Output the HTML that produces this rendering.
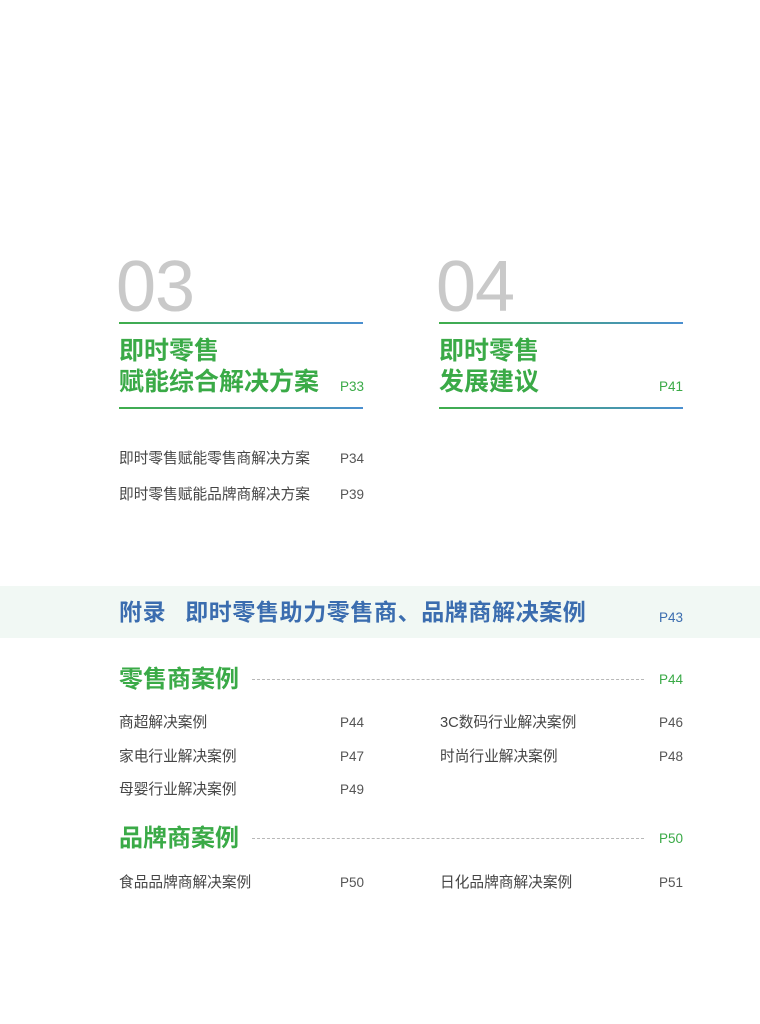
<!DOCTYPE html>
<html><head><meta charset="utf-8"><style>
body{margin:0;width:760px;height:1024px;background:#fff;position:relative;overflow:hidden;font-family:"Liberation Sans","Noto Sans CJK SC",sans-serif;}
.a{position:absolute;white-space:nowrap;line-height:1;}
.num{font-size:72px;color:#c9c9c9;letter-spacing:-1px;}
.ln{position:absolute;height:1.5px;background:linear-gradient(90deg,#3fae4a,#4a8fd0);}
.h{font-size:25px;font-weight:bold;color:#3aaa47;line-height:31px;}
.g{color:#3aaa47;}
.p{font-size:13.5px;}
.it{font-size:14.7px;color:#454545;}
.ip{font-size:13.5px;color:#555;}
.dash{position:absolute;height:0;border-top:1px dashed #b8b8b8;}
</style></head><body>
<div class="a num" style="left:116px;top:251px;">03</div>
<div class="a num" style="left:436px;top:251px;">04</div>
<div class="ln" style="left:119px;top:322px;width:244px;"></div>
<div class="ln" style="left:439px;top:322px;width:244px;"></div>
<div class="ln" style="left:119px;top:407px;width:244px;"></div>
<div class="ln" style="left:439px;top:407px;width:244px;"></div>
<div class="a h" style="left:119px;top:336px;">即时零售<br>赋能综合解决方案</div>
<div class="a h" style="left:439px;top:336px;">即时零售<br>发展建议</div>
<div class="a p g" style="left:340px;top:380px;">P33</div>
<div class="a p g" style="left:659px;top:380px;">P41</div>
<div class="a it" style="left:119px;top:452px;">即时零售赋能零售商解决方案</div>
<div class="a ip" style="left:340px;top:452px;">P34</div>
<div class="a it" style="left:119px;top:488px;">即时零售赋能品牌商解决方案</div>
<div class="a ip" style="left:340px;top:488px;">P39</div>

<div style="position:absolute;left:0;top:586px;width:760px;height:52px;background:#f1f8f4;"></div>
<div class="a" style="left:119px;top:601px;font-size:23px;font-weight:bold;color:#3b6daf;letter-spacing:0.6px;">附录<span style="display:inline-block;width:19px"></span>即时零售助力零售商、品牌商解决案例</div>
<div class="a p" style="left:659px;top:611px;color:#3b6daf;">P43</div>

<div class="a" style="left:119px;top:668px;font-size:24px;font-weight:bold;color:#3aaa47;">零售商案例</div>
<div class="dash" style="left:252px;top:679px;width:392px;"></div>
<div class="a p g" style="left:659px;top:673px;">P44</div>

<div class="a it" style="left:119px;top:716px;">商超解决案例</div>
<div class="a ip" style="left:340px;top:716px;">P44</div>
<div class="a it" style="left:440px;top:716px;">3C数码行业解决案例</div>
<div class="a ip" style="left:659px;top:716px;">P46</div>
<div class="a it" style="left:119px;top:750px;">家电行业解决案例</div>
<div class="a ip" style="left:340px;top:750px;">P47</div>
<div class="a it" style="left:440px;top:750px;">时尚行业解决案例</div>
<div class="a ip" style="left:659px;top:750px;">P48</div>
<div class="a it" style="left:119px;top:783px;">母婴行业解决案例</div>
<div class="a ip" style="left:340px;top:783px;">P49</div>

<div class="a" style="left:119px;top:827px;font-size:24px;font-weight:bold;color:#3aaa47;">品牌商案例</div>
<div class="dash" style="left:252px;top:838px;width:392px;"></div>
<div class="a p g" style="left:659px;top:832px;">P50</div>

<div class="a it" style="left:119px;top:876px;">食品品牌商解决案例</div>
<div class="a ip" style="left:340px;top:876px;">P50</div>
<div class="a it" style="left:440px;top:876px;">日化品牌商解决案例</div>
<div class="a ip" style="left:659px;top:876px;">P51</div>
</body></html>
